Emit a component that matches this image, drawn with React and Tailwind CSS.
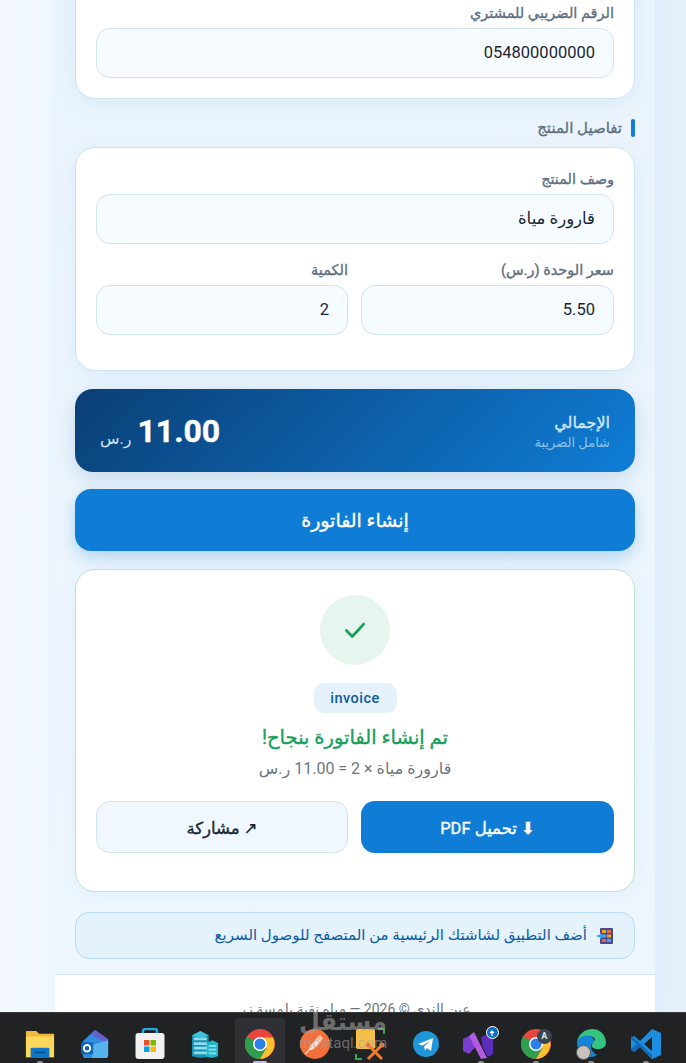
const arabic = "font-['Roboto','DejaVu_Sans',sans-serif]";
const semi = "font-normal [-webkit-text-stroke:0.35px]";

function Field({ label, value, className = "" }) {
  return (
    <div className={`flex flex-col ${className}`}>
      <label className={`mb-[5px] h-[20px] text-[14.5px] leading-[22px] text-[#5f6f80] ${semi}`}>{label}</label>
      <div className="flex h-[50px] items-center rounded-[14px] border border-[#cfe3f3] bg-[#f6fbff] px-[18px] text-[16.5px] text-[#1a2733]">
        {value}
      </div>
    </div>
  );
}

function FolderIcon() {
  return (
    <svg width="30" height="30" viewBox="0 0 32 32">
      <path d="M1 2h11l3 3h16v25H1z" fill="#f0b93a" />
      <path d="M1 8h30v22H1z" fill="#fdd85d" />
      <path d="M7 20h18a1 1 0 0 1 1 1v9H6v-9a1 1 0 0 1 1-1z" fill="#0f78c8" />
      <rect x="10" y="24" width="12" height="2" fill="#0a4f8f" />
    </svg>
  );
}

function OutlookIcon() {
  return (
    <svg width="30" height="30" viewBox="0 0 32 32">
      <path d="M3 13 16 1l14 10v17a3 3 0 0 1-3 3H6a3 3 0 0 1-3-3z" fill="#2f8ee0" />
      <path d="M16 1l14 10v5L12 6z" fill="#6a5fd0" />
      <path d="M13 17l17-5v16a3 3 0 0 1-3 3H13z" fill="#54b2ee" />
      <rect x="1" y="14" width="13" height="13" rx="2" fill="#0d63b5" />
      <circle cx="7.500" cy="20.500" r="3.500" fill="none" stroke="#fff" strokeWidth="2" />
    </svg>
  );
}

function StoreIcon() {
  return (
    <svg width="30" height="32" viewBox="0 0 30 32">
      <path d="M8 7V3a2 2 0 0 1 2-2h10a2 2 0 0 1 2 2v4" fill="none" stroke="#2aa6d8" strokeWidth="2.500" />
      <rect x="0.500" y="5" width="29" height="26" rx="3" fill="#f1f1f1" />
      <rect x="9" y="12" width="5.500" height="5.500" fill="#e8532b" />
      <rect x="15.500" y="12" width="5.500" height="5.500" fill="#7fb900" />
      <rect x="9" y="18.500" width="5.500" height="5.500" fill="#0a9fe8" />
      <rect x="15.500" y="18.500" width="5.500" height="5.500" fill="#fbb800" />
    </svg>
  );
}

function BuildingsIcon() {
  return (
    <svg width="28" height="30" viewBox="0 0 30 30">
      <path d="M1 6l9-5 9 5v23l-9 1-9-2z" fill="#1590b0" />
      <path d="M16 14l7-3 6 3v14l-7 2-6-2z" fill="#23b4cc" />
      <path d="M3 8h14v3H3zM3 13h14v3H3zM3 18h14v3H3zM3 23h14v3H3zM19 16h8v2h-8zM19 20h8v2h-8zM19 24h8v2h-8z" fill="#8fdcea" />
      <path d="M1 6l9-5 9 5-9 3z" fill="#3cc4dc" />
    </svg>
  );
}

function ChromeIcon() {
  return (
    <svg width="30" height="30" viewBox="0 0 30 30">
      <circle cx="15" cy="15" r="15" fill="#e8453c" />
      <path d="M15 15 2 7.500A15 15 0 0 0 15 30l6.500-11z" fill="#2f9e4f" />
      <path d="M15 8.500h13A15 15 0 0 1 15 30l6.500-11z" fill="#fbc02d" />
      <circle cx="15" cy="15" r="7" fill="#fff" />
      <circle cx="15" cy="15" r="5.500" fill="#2f7fe8" />
    </svg>
  );
}

function PostmanIcon() {
  return (
    <svg width="30" height="30" viewBox="0 0 30 30">
      <circle cx="15" cy="15" r="15" fill="#f4703a" />
      <path d="M8 22l2-5 7-8 4 3-7 8z" fill="#fde2d4" />
      <path d="M17 8l3-2 3 3-2 3z" fill="#f9c7ae" />
      <path d="M5 25l3-3" stroke="#fde2d4" strokeWidth="1.500" />
    </svg>
  );
}

function ToolIcon() {
  return (
    <svg width="32" height="32" viewBox="0 0 32 32">
      <rect x="2" y="1" width="19" height="20" rx="2" fill="#f5c04a" />
      <path d="M2 26v5h6M24 1h6v5" fill="none" stroke="#34a853" strokeWidth="2" />
      <path d="M14 31 28 17M14 17l14 14" stroke="#ee7a2e" strokeWidth="3" />
      <circle cx="28" cy="17" r="2.500" fill="#ee7a2e" />
      <circle cx="14" cy="17" r="2.500" fill="#ee7a2e" />
    </svg>
  );
}

function TelegramIcon() {
  return (
    <svg width="26" height="26" viewBox="0 0 26 26">
      <circle cx="13" cy="13" r="13" fill="#1e96d8" />
      <path d="M5 13 20 7l-2 13-4-3-2 2.500-1-4 6.500-5.500-8 4.500z" fill="#fff" />
    </svg>
  );
}

function VisualStudioIcon() {
  return (
    <div className="relative h-[30px] w-[36px]">
      <svg width="30" height="28" viewBox="0 0 30 28" className="absolute bottom-0 left-0">
        <path d="M0 8l6-3 8 9-8 9-6-3z" fill="#7a3fd0" />
        <path d="M6 5l5-4 13 26-6 1z" fill="#b25ae0" />
        <path d="M18 6l7-3 5 3v17l-5 3-5-9z" fill="#5c2dbb" />
      </svg>
      <div className="absolute right-0 top-[-3px] flex h-[13px] w-[13px] items-center justify-center rounded-full border border-white bg-[#0f6fc0]">
        <svg width="8" height="8" viewBox="0 0 8 8">
          <path d="M4 7V2M2 4l2-2 2 2" fill="none" stroke="#fff" strokeWidth="1.200" />
        </svg>
      </div>
    </div>
  );
}

function ChromeProfileIcon() {
  return (
    <div className="relative">
      <ChromeIcon />
      <div className="absolute right-[-1px] top-0 flex h-[15px] w-[15px] items-center justify-center rounded-full bg-[#3a4552] text-[9px] font-bold text-[#dfe5ea]">A</div>
    </div>
  );
}

function EdgeIcon() {
  return (
    <div className="relative">
      <svg width="30" height="30" viewBox="0 0 30 30">
        <path d="M1 14C2 5 9 0 16 0c8 0 14 6 14 14 0 4-4 6-8 6-5 0-6-2-6-3 0-4 3-5 3-7-3-5-14-4-18 4z" fill="#33c481" />
        <path d="M1 14c2-6 8-9 13-7 4 2 5 5 3 7-3 2-3 8 4 12-8 5-19 2-20-12z" fill="#1384d6" />
      </svg>
      <div className="absolute bottom-[-1px] left-0 h-[15px] w-[15px] rounded-full border border-[#555] bg-[#c9c2bd]" />
    </div>
  );
}

function VSCodeIcon() {
  return (
    <svg width="30" height="30" viewBox="0 0 30 30">
      <path d="M21 0 30 4v22l-9 4-12-12-6 5-3-2v-12l3-2 6 5z" fill="#1e8fe0" />
      <path d="M21 8 13 15l8 7z" fill="#202224" />
      <path d="M3 9 21 26v4L9 18l-6 5-3-2v-1l6-5-6-5v-3z" fill="#0f6ab8" />
    </svg>
  );
}

const taskbarIcons = [
  FolderIcon, OutlookIcon, StoreIcon, BuildingsIcon, ChromeIcon, PostmanIcon,
  ToolIcon, TelegramIcon, VisualStudioIcon, ChromeProfileIcon, EdgeIcon, VSCodeIcon,
];
const runningApps = [0, 4, 8, 9, 10, 11];

export default function App() {
  return (
    <div className={`relative h-[1063px] w-[686px] overflow-hidden bg-[linear-gradient(90deg,#f3f9ff_0%,#eef6fd_50%,#e5f0fa_100%)] ${arabic}`} dir="rtl">
      <div className="mr-[31px] h-full w-[600px] bg-[linear-gradient(180deg,#e9f3fb_0%,#eff7fe_100%)] shadow-[0_0_24px_rgba(15,125,214,0.06)]">
        <div className="px-5">
          {/* first card is scrolled off the top of the page */}
          <section className="mt-[-40px] rounded-[20px] border border-[#cfe3f3] bg-white px-5 pb-5 pt-[42px] shadow-[0_4px_20px_rgba(15,125,214,0.07)]">
            <Field label="الرقم الضريبي للمشتري" value={<span dir="ltr">054800000000</span>} />
          </section>

          <h2 className={`mb-[10px] mt-[19px] flex h-[19px] items-center gap-[9px] text-[15px] text-[#5f6f80] ${semi}`}>
            <span className="h-[18px] w-[4px] rounded-sm bg-[#0f7dd6]" />
            <span className="mt-[2px]">تفاصيل المنتج</span>
          </h2>

          <section className="rounded-[20px] border border-[#cfe3f3] bg-white px-5 pb-[35px] pt-[21px] shadow-[0_4px_20px_rgba(15,125,214,0.07)]">
            <Field label="وصف المنتج" value="قارورة مياة" />
            <div className="mt-[16px] grid grid-cols-[253px_252px] gap-[13px]">
              <Field label="سعر الوحدة (ر.س)" value="5.50" />
              <Field label="الكمية" value="2" />
            </div>
          </section>

          <section className="mt-[18px] flex h-[83px] items-center justify-between rounded-[18px] bg-[linear-gradient(135deg,#0a3f75,#0f7dd6)] px-[25px] shadow-[0_6px_20px_rgba(15,90,160,0.18)]">
            <div className="pt-[3px]">
              <div className={`text-[16px] leading-[20px] text-[#cfe6f8] ${semi}`}>الإجمالي</div>
              <div className="text-[13px] leading-[19px] text-[#8fc3ea]">شامل الضريبة</div>
            </div>
            <div className="flex items-end gap-[6px] pt-[1px]" dir="ltr">
              <span className="mb-[1px] text-[16px] leading-[20px] text-[#cfe6f8]" dir="rtl">ر.س</span>
              <span className="text-[32px] leading-[38px] font-bold text-white [-webkit-text-stroke:0.4px]">11.00</span>
            </div>
          </section>

          <button className={`mt-[17px] flex h-[62px] w-full items-center justify-center rounded-[16px] bg-[#0f7dd6] pt-[3px] text-[19px] text-white shadow-[0_6px_16px_rgba(15,125,214,0.28)] ${semi}`}>
            إنشاء الفاتورة
          </button>

          <section className="mt-[18px] flex h-[323px] flex-col items-center rounded-[20px] border border-[#bfe3cd] bg-white px-5 pt-[25px] shadow-[0_4px_20px_rgba(15,125,214,0.06)]">
            <div className="flex h-[70px] w-[70px] items-center justify-center rounded-full bg-[#e6f5ed]">
              <svg width="26" height="26" viewBox="0 0 24 24" fill="none" stroke="#16a05a" strokeWidth="2.500" strokeLinecap="round" strokeLinejoin="round">
                <path d="M4 12.500 9.500 18 20 6.500" />
              </svg>
            </div>
            <span className="mt-[18px] flex h-[30px] w-[83px] items-center justify-center rounded-[10px] bg-[#e6f2fb] pt-[2px] text-[14.5px] font-medium tracking-[0.5px] text-[#0f5c9e]">invoice</span>
            <h3 className={`mt-[12px] h-[26px] text-[19.5px] leading-[26px] text-[#16a05a] ${semi}`}>تم إنشاء الفاتورة بنجاح!</h3>
            <p className="mt-[8px] h-[20px] text-[16px] leading-[20px] text-[#6b7680]">قارورة مياة × 2 = 11.00 ر.س</p>
            <div className="mt-[22px] grid w-full grid-cols-[253px_252px] gap-[13px]">
              <button className={`flex h-[52px] items-center justify-center gap-1 rounded-[14px] bg-[#0f7dd6] pt-[4px] text-[16.5px] text-white ${semi}`}>
                ⬇ تحميل PDF
              </button>
              <button className={`flex h-[52px] items-center justify-center gap-1 rounded-[14px] border border-[#cfe3f3] bg-[#f0f7fe] pt-[4px] text-[16.5px] text-[#1a2733] ${semi}`}>
                ↗ مشاركة
              </button>
            </div>
          </section>

          <div className="mt-[20px] flex h-[47px] items-center gap-[10px] rounded-[14px] border border-[#b5dbf5] bg-[#e4f2fc] px-[21px] text-[15px] text-[#0f5c9e]">
            <svg width="16" height="16" viewBox="0 0 16 16" className="shrink-0">
              <rect x="3" y="0" width="13" height="16" rx="1" fill="#4a4a8a" />
              <rect x="5" y="2" width="4" height="3" fill="#f5a623" />
              <rect x="10" y="2" width="4" height="3" fill="#e8694a" />
              <rect x="5" y="6.500" width="4" height="3" fill="#4fa3e0" />
              <rect x="10" y="6.500" width="4" height="3" fill="#f5a623" />
              <rect x="5" y="11" width="4" height="3" fill="#e8694a" />
              <rect x="10" y="11" width="4" height="3" fill="#4fa3e0" />
              <path d="M0 8h5M5 8 3 5.500M5 8l-2 2.500" stroke="#38a6f0" strokeWidth="2" fill="none" />
            </svg>
            أضف التطبيق لشاشتك الرئيسية من المتصفح للوصول السريع
          </div>
        </div>

        <footer className="mt-[15px] h-[120px] border-t border-[#cfe3f3] bg-white pt-[24px] text-center text-[14px] text-[#6b7680]">
          عين الندى © 2026 — مياه نقية بلمسة زر
        </footer>
      </div>

      {/* windows taskbar sits on top of the page */}
      <div className="absolute inset-x-0 bottom-0 flex h-[51px] items-start justify-between border-t border-[#3a3a3a] bg-[#202224] px-[23px] pt-[15px]" dir="ltr">
        {taskbarIcons.map((Icon, i) => (
          <div key={i} className="relative flex h-[32px] w-[34px] items-center justify-center">
            {i === 4 && <div className="absolute left-[-8px] top-[-10px] h-[47px] w-[50px] rounded-t-[4px] bg-[#2e3033]" />}
            {runningApps.includes(i) && (
              <div className={`absolute bottom-[-4px] left-1/2 h-[3px] -translate-x-1/2 rounded-full ${i === 4 ? "w-[14px] bg-[#c4b8e0]" : "w-[6px] bg-[#8a8a8a]"}`} />
            )}
            <div className="relative"><Icon /></div>
          </div>
        ))}
      </div>
      <div className="absolute left-[283px] top-[1009px] w-[120px] text-center text-[#a0a0a0]/60" dir="rtl">
        <div className="text-[24px] leading-[27px] font-bold">مستقل</div>
        <div className="text-[15px] leading-[14px]" dir="ltr">mostaql.com</div>
      </div>
    </div>
  );
}
